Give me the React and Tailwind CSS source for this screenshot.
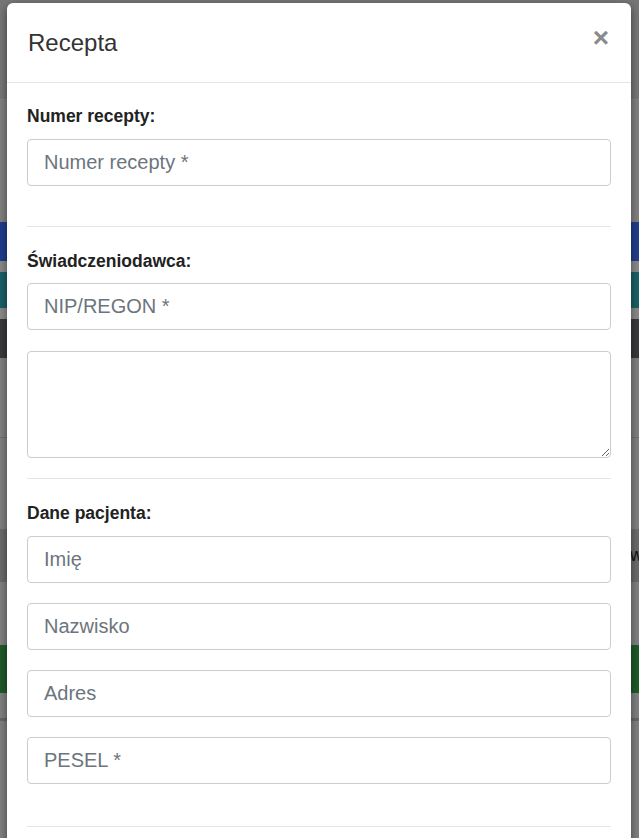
const font = { fontFamily: '"Liberation Sans", Arial, sans-serif' }

const inputClass =
  'block w-full h-[47px] rounded-[4px] border border-[#cccccc] bg-white px-4 text-[20px] text-[#333] placeholder:text-[#6c757d] outline-none'

function Field({ placeholder }) {
  return <input type="text" placeholder={placeholder} className={inputClass} />
}

function Label({ children }) {
  return <div className="text-[17.5px] leading-[20px] font-bold text-[#222]">{children}</div>
}

function Backdrop() {
  // dimmed page behind the modal
  return (
    <div className="flex flex-col w-full h-full bg-[#808080]">
      <div className="h-[100px] bg-[#767676] border-b border-[#858585]" />
      <div className="h-[122px]" />
      <div className="h-[39px] bg-[#213d8c]" />
      <div className="h-[11px] bg-[#8a8a8a]" />
      <div className="h-[36px] bg-[#1a6066]" />
      <div className="h-[11px] bg-[#8a8a8a]" />
      <div className="h-[39px] bg-[#38393b]" />
      <div className="h-[80px] border-b border-[#6f6f6f]" />
      <div className="h-[91px]" />
      <div className="h-[53px] bg-[#6b6b6b] flex items-center justify-end">
        <span className="text-[18px] text-[#111] mr-[-4px]">w</span>
      </div>
      <div className="h-[63px]" />
      <div className="h-[48px] bg-[#1e5a28]" />
      <div className="h-[28px] border-b-[3px] border-[#686868]" />
    </div>
  )
}

export default function App() {
  return (
    <div className="relative w-[639px] h-[838px] overflow-hidden" style={font}>
      <Backdrop />

      <div className="absolute left-[7px] top-[3px] w-[624px] rounded-[6px] bg-white shadow-[0_3px_9px_rgba(0,0,0,0.5)]">
        <div className="flex items-center justify-between h-[80px] pl-[21px] pr-[22px] border-b border-[#e5e5e5]">
          <h4 className="text-[24px] leading-[28px] text-[#333] font-normal">Recepta</h4>
          <button type="button" className="text-[28px] leading-none font-bold text-[#8a8a8a] mt-[-10px]">
            ×
          </button>
        </div>

        <div className="px-[20px] pt-[23px]">
          <Label>Numer recepty:</Label>
          <div className="mt-[13px]">
            <Field placeholder="Numer recepty *" />
          </div>
          <hr className="mt-[40px] border-t border-[#e5e5e5]" />

          <div className="mt-[24px]">
            <Label>Świadczeniodawca:</Label>
          </div>
          <div className="mt-[12px]">
            <Field placeholder="NIP/REGON *" />
            <textarea className="block mt-[21px] w-full h-[107px] rounded-[4px] border border-[#cccccc] bg-white px-4 py-2 text-[20px] outline-none" />
          </div>
          <hr className="mt-[20px] border-t border-[#e5e5e5]" />

          <div className="mt-[24px]">
            <Label>Dane pacjenta:</Label>
          </div>
          <div className="mt-[13px] flex flex-col gap-[20px]">
            <Field placeholder="Imię" />
            <Field placeholder="Nazwisko" />
            <Field placeholder="Adres" />
            <Field placeholder="PESEL *" />
          </div>
          <hr className="mt-[42px] border-t border-[#e5e5e5]" />
          <div className="h-[60px]" />
        </div>
      </div>
    </div>
  )
}
